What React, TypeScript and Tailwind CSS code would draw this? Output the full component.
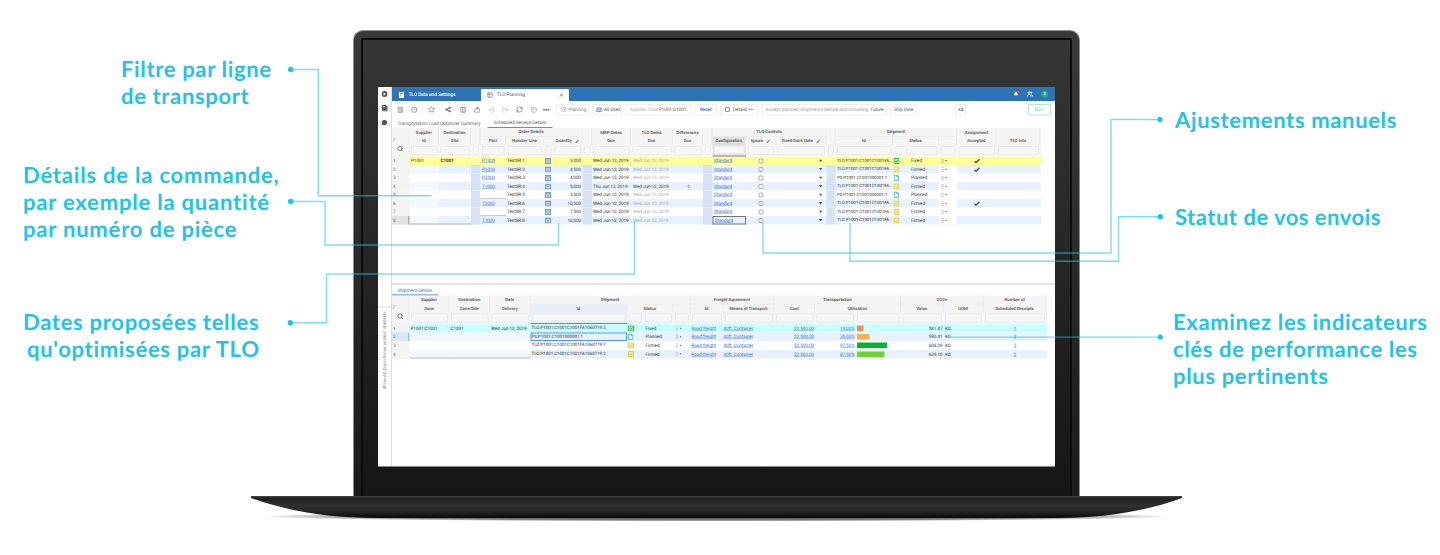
import type { ReactNode } from 'react'
import clsx from 'clsx'
import {
  Bell,
  Building2,
  Calculator,
  CircleHelp,
  Columns3,
  FileText,
  ListChecks,
  LogIn,
  LogOut,
  MessageCircle,
  MoreHorizontal,
  PanelsTopLeft,
  RefreshCw,
  Search,
  Share2,
  Star,
  Table2,
  Users,
  Weight,
  X,
} from 'lucide-react'

type Column = { label?: string; edit?: boolean; active?: boolean; span?: number; tint?: boolean }
type Group = { label?: string; span: number }

const PLAN_GRID =
  'grid grid-cols-[17.5px_29.5px_32px_9.5px_25.5px_38px_9px_29.5px_9.5px_39px_42px_30px_9.5px_33.5px_30px_50.5px_9px_57.5px_16px_30px_18px_39.5px_44px]'
const SHIP_GRID =
  'grid grid-cols-[17.5px_40px_40.5px_40.5px_96.5px_16.5px_30px_17px_33px_51px_40.5px_40.5px_45.5px_42.5px_40px_63px]'

const planGroups: Group[] = [
  { label: 'Supplier', span: 1 },
  { label: 'Destination', span: 1 },
  { span: 1 },
  { label: 'Order Details', span: 4 },
  { span: 1 },
  { label: 'MRP Dates', span: 1 },
  { label: 'TLO Dates', span: 1 },
  { label: 'Differences', span: 1 },
  { span: 1 },
  { label: 'TLO Controls', span: 3 },
  { span: 1 },
  { label: 'Shipment', span: 4 },
  { label: 'Assignment', span: 1 },
  { span: 1 },
]

const planColumns: Column[] = [
  { label: 'Id' },
  { label: 'Site' },
  {},
  { label: 'Part' },
  { label: 'Number Line' },
  {},
  { label: 'Quantity', edit: true },
  {},
  { label: 'Due' },
  { label: 'Due' },
  { label: 'Due' },
  {},
  { label: 'Configuration', active: true },
  { label: 'Ignore', edit: true },
  { label: 'Fixed Dock Date', edit: true },
  {},
  { label: 'Id' },
  { label: 'Status', span: 2 },
  {},
  { label: 'Accepted' },
  { label: 'TLO Info' },
]

const shipGroups: Group[] = [
  { label: 'Supplier', span: 1 },
  { label: 'Destination', span: 1 },
  { label: 'Date', span: 1 },
  { label: 'Shipment', span: 4 },
  { label: 'Freight Agreement', span: 2 },
  { label: 'Transportation', span: 3 },
  { label: 'CO2e', span: 2 },
  { label: 'Number of', span: 1 },
]

const shipColumns: Column[] = [
  { label: 'Zone' },
  { label: 'Zone/Site' },
  { label: 'Delivery' },
  { label: 'Id', tint: true },
  { label: 'Status', span: 2 },
  {},
  { label: 'Id' },
  { label: 'Means of Transport' },
  { label: 'Cost' },
  { label: 'Utilization', span: 2 },
  { label: 'Value' },
  { label: 'UOM' },
  { label: 'Scheduled Receipts' },
]

type Status = 'Fixed' | 'Firmed' | 'Planned'
type PlanRow = { part?: string; qty: string; mrp?: string; diff?: string; status: Status; accepted?: boolean }

const planRows: PlanRow[] = [
  { part: 'P1000', qty: '3,000', status: 'Fixed', accepted: true },
  { part: 'P2000', qty: '4,500', status: 'Firmed', accepted: true },
  { part: 'P3000', qty: '4,000', status: 'Planned' },
  { part: 'T1000', qty: '5,000', mrp: 'Thu Jun 13, 2019', diff: '-1', status: 'Firmed' },
  { qty: '3,000', status: 'Planned' },
  { part: 'T2000', qty: '10,000', status: 'Firmed', accepted: true },
  { qty: '7,500', status: 'Firmed' },
  { part: 'T3000', qty: '10,000', status: 'Firmed' },
]

const shipRows = [
  { id: 'TLO:P1001:C1001C1001FA1060719:3', status: 'Fixed', util: '15.00%', bar: 'w-[6.5px] bg-[#f58d4e]', co2: '581.47', n: '1' },
  { id: 'PS:P1001:C1001000001:1', status: 'Planned', util: '35.00%', bar: 'w-[12.5px] bg-[#f5b04e]', co2: '590.41', n: '2' },
  { id: 'TLO:P1001:C1001C1001FA1060719:1', status: 'Firmed', util: '97.50%', bar: 'w-[30px] bg-[#06b32e]', co2: '608.29', n: '3' },
  { id: 'TLO:P1001:C1001C1001FA1060719:2', status: 'Firmed', util: '87.50%', bar: 'w-[27.5px] bg-[#6fd136]', co2: '635.10', n: '2' },
] as const

export default function App() {
  return (
    <main className="relative flex h-[555px] w-[1440px] overflow-hidden bg-white font-['Roboto',sans-serif] [text-rendering:geometricPrecision]">
      <aside className="w-[353px] shrink-0 pt-[55px]">
        <Caption className="ml-[121px] h-[106px] tracking-[0.65px]">
          <span>Filtre par ligne</span>
          <span>de transport</span>
        </Caption>
        <Caption className="ml-[23px] h-[147px] tracking-[0.8px]">
          <span>Détails de la commande,</span>
          <span>par exemple la quantité</span>
          <span>par numéro de pièce</span>
        </Caption>
        <Caption className="ml-[23px] tracking-[0.7px]">
          <span>Dates proposées telles</span>
          <span className="ml-[4px]">qu'optimisées par TLO</span>
        </Caption>
      </aside>

      <Laptop />

      <aside className="pt-[106px] pl-[93px]">
        <Caption className="ml-[2px] h-[97px] tracking-[0.65px]">
          <span>Ajustements manuels</span>
        </Caption>
        <Caption className="ml-[2px] h-[105px] tracking-[0.5px]">
          <span>Statut de vos envois</span>
        </Caption>
        <Caption className="tracking-[0.65px]">
          <span>Examinez les indicateurs</span>
          <span>clés de performance les</span>
          <span>plus pertinents</span>
        </Caption>
      </aside>

      <Connectors />
    </main>
  )
}

function Caption({ className, children }: { className?: string; children: ReactNode }) {
  return (
    <p
      className={clsx(
        "flex flex-col font-['Lato',sans-serif] text-[22px] leading-[27px] font-bold whitespace-nowrap text-[#22c3e6]",
        className,
      )}
    >
      {children}
    </p>
  )
}

// Callout lines running from the captions onto the screen
function Connectors() {
  const lines = [
    'M291 69.5H318.3V195.8H431.5',
    'M291 201.5H325V245H558.5V223',
    'M291 322.7H326.5V274H634.5V222',
    'M1160 119.5H1111V253H763V223',
    'M1160 216.8H1118.5V261.2H850V223',
    'M1160 337.1H950',
  ]
  const dots = [
    [290.7, 69.5],
    [290.7, 201.5],
    [290.3, 322.7],
    [1160, 119.5],
    [1160.3, 216.8],
    [1160.3, 337.1],
  ]
  return (
    <svg className="absolute inset-0" width="1440" height="555" viewBox="0 0 1440 555" fill="none">
      {lines.map((d) => (
        <path key={d} d={d} stroke="#22c3e6" strokeWidth="1.4" strokeOpacity=".58" />
      ))}
      {dots.map(([x, y]) => (
        <circle key={`${x}-${y}`} cx={x} cy={y} r="2.7" fill="#22c3e6" />
      ))}
    </svg>
  )
}

function Laptop() {
  return (
    <div className="w-[727px] shrink-0 pt-[30px]">
      <div className="h-[466px] rounded-t-[10px] border-x border-t border-[#8d8d8d] bg-linear-to-b from-[#3a3a3a] to-[#1b1b1b] px-[7px] pt-[7px]">
        <div className="h-full rounded-t-[2px] border-x-2 border-t-2 border-[#0b0b0b] bg-linear-to-b from-[#353535] to-[#161616] px-[14.5px] pt-[47px]">
          <Screen />
        </div>
      </div>
      <svg className="-mx-[102px] block" width="931" height="30" viewBox="0 0 931 30">
        <defs>
          <linearGradient id="base" x1="0" y1="0" x2="0" y2="1">
            <stop offset="0" stopColor="#4a4a4a" />
            <stop offset=".1" stopColor="#202020" />
            <stop offset=".45" stopColor="#303030" />
            <stop offset=".75" stopColor="#222" />
            <stop offset="1" stopColor="#080808" />
          </linearGradient>
          <radialGradient id="shade">
            <stop offset="0" stopColor="#000" stopOpacity=".75" />
            <stop offset=".75" stopColor="#000" stopOpacity=".5" />
            <stop offset="1" stopColor="#000" stopOpacity="0" />
          </radialGradient>
        </defs>
        <ellipse cx="465" cy="20.5" rx="456" ry="5" fill="url(#shade)" />
        <path d="M0 0H931V2C895 15 855 22 805 22H126C76 22 36 15 0 2Z" fill="url(#base)" />
      </svg>
    </div>
  )
}

// Laid out at double size and scaled back so the tiny text and hairlines keep fractional positions
function Screen() {
  return (
    <div className="h-[380px] w-[677px] overflow-hidden">
      <div className="flex h-[380px] w-[677px] origin-top-left scale-50 border-b border-[#888] bg-white text-[4.6px] leading-none tracking-[-0.05px] whitespace-nowrap text-[#333] [zoom:2]">
        <nav className="flex w-[14px] shrink-0 flex-col items-center border-r border-[#ddd] pt-[4px] text-[#444]">
          <svg width="6" height="6" viewBox="0 0 12 12">
            <circle cx="6" cy="6" r="6" fill="#555" />
            <path d="M4 2.5L9 6L4 9.5Z" fill="#eee" />
          </svg>
          <FileText className="mt-[8px]" size={6.5} strokeWidth={4} />
          <MessageCircle className="mt-[8px]" size={6} fill="#555" />
          <div className="mt-[181px] flex w-full justify-center border-t border-[#ddd] pt-[4px]">
            <span className="rotate-180 text-[4.3px] text-[#888] [writing-mode:vertical-rl]">
              4Flow AG Demo Server am06s1:db606Mv
            </span>
          </div>
        </nav>
        <div className="flex min-w-0 flex-1 flex-col">
          <TitleBar />
          <Toolbar />
          <div className="flex h-[10px] shrink-0 items-stretch pl-[5.5px] text-[4.7px] text-[#666]">
            <span className="flex w-[90px] items-center pt-[1px]">Transportation Load Optimizer Summary</span>
            <span className="flex w-[65px] items-center border-b border-[#888] pt-[1px] pl-[6px]">
              Scheduled Receipt Details
            </span>
          </div>
          <PlanTable />
          <div className="mt-[58.5px] h-[2px] shrink-0 bg-[#e4e4e4]" />
          <div className="flex h-[10.5px] w-[46.5px] shrink-0 items-center border-b border-[#2878d8] pt-[1px] pl-[5.5px] text-[4.7px] text-[#2878d8]">
            Shipment Details
          </div>
          <ShipTable />
        </div>
      </div>
    </div>
  )
}

function TitleBar() {
  return (
    <header className="flex h-[14px] shrink-0 items-stretch bg-[#2e74b2] text-[4.8px] text-white">
      <div className="flex w-[89px] items-center gap-[4px] pt-[2px] pl-[6.5px] font-medium">
        <svg width="6" height="7" viewBox="0 0 12 14">
          <path d="M1 1H11V13H1Z" fill="#fff" />
          <path d="M3 4H9M3 7H6" stroke="#2e74b2" strokeWidth="1.5" />
        </svg>
        TLO Data and Settings
      </div>
      <div className="mt-[2px] flex w-[88px] items-center rounded-t-[1px] bg-white pl-[6px] text-[#555]">
        <PanelsTopLeft size={6} />
        <span className="ml-[4px] flex-1">TLO Planning</span>
        <X className="mr-[5px]" size={5} strokeWidth={3} />
      </div>
      <div className="ml-auto flex items-center gap-[8.5px] pr-[7px]">
        <span className="relative">
          <Bell size={5} fill="#fff" />
          <i className="absolute -top-px -right-px size-[2.5px] rounded-full bg-[#f04438]" />
        </span>
        <Users size={6} strokeWidth={3} />
        <span className="flex size-[6.5px] items-center justify-center rounded-full bg-[#20b28c] text-[4px]">S</span>
      </div>
    </header>
  )
}

function Toolbar() {
  const box = 'flex h-[11.5px] shrink-0 items-center rounded-[1px] border border-[#eee] text-[#555]'
  return (
    <div className="flex h-[17px] shrink-0 items-center pl-[5px] text-[4.7px] text-[#666]">
      <Calculator size={6.5} />
      <CircleHelp className="ml-[7.5px]" size={6.5} />
      <i className="ml-[4.5px] h-[9px] border-l border-[#eee]" />
      <Star className="ml-[5px]" size={7} />
      <Share2 className="ml-[10px]" size={6} strokeWidth={3.5} />
      <span className="ml-[5.5px] flex h-[11px] w-[13px] items-center justify-center border border-[#f0f0f0]">
        <Columns3 className="shrink-0" size={6.5} />
      </span>
      <Weight className="ml-[4.5px]" size={6.5} />
      <LogIn className="ml-[7.5px] text-[#aaa]" size={6.5} />
      <LogOut className="ml-[7.5px] text-[#aaa]" size={6.5} />
      <RefreshCw className="ml-[7.5px]" size={7} />
      <Table2 className="ml-[7.5px] text-[#aaa]" size={6.5} />
      <MoreHorizontal className="ml-[5.5px]" size={7.5} strokeWidth={4} />
      <span className={clsx(box, 'ml-[6px] w-[33px] gap-[2px] pl-[3.5px] text-[#777]')}>
        <ListChecks size={6} />
        Planning
      </span>
      <span className={clsx(box, 'ml-[3px] w-[30px] gap-[2px] pl-[3px]')}>
        <Building2 className="text-[#2878d8]" size={6} />
        All Sites
      </span>
      <span className={clsx(box, 'ml-[3px] w-[66px] justify-center gap-[1px]')}>
        <span className="text-[#aaa]">Supplier Zone</span>P1001:C1001
      </span>
      <span className={clsx(box, 'ml-[3.5px] w-[22.5px] justify-center font-medium !text-[#2f6bd8]')}>Reset</span>
      <span className={clsx(box, 'ml-[3px] w-[38px] gap-[3px] pl-[4px]')}>
        <i className="size-[5px] rounded-[1px] border border-[#999]" />
        Details &gt;&gt;
      </span>
      <span className={clsx(box, 'ml-[4px] w-[125px] justify-center gap-[1px]')}>
        <span className="tracking-[0.08px] text-[#999]">Accept planned shipments before and including:</span>Future
      </span>
      <span className={clsx(box, 'ml-[3px] w-[27px] justify-center')}>Ship Date</span>
      <span className={clsx(box, 'ml-[38px] w-[11px] justify-center font-bold')}>+3</span>
      <span className="mr-[4px] ml-auto flex h-[11.5px] w-[23px] items-center justify-center rounded-[1px] border border-[#b5e3df] text-[#6bc4bd]">
        EDIT
      </span>
    </div>
  )
}

function TableHeader({ grid, groups, columns }: { grid: string; groups: Group[]; columns: Column[] }) {
  return (
    <div className={clsx(grid, 'grid-rows-[9px_8.5px_11px] bg-[#f5f5f5] text-center text-[4.4px] font-bold text-[#666]')}>
      <div className="row-span-3 flex flex-col border-r border-[#eee] pt-[9.5px]">
        <svg className="ml-[0.5px]" width="5" height="5" viewBox="0 0 5 5">
          <path d="M0 0H5L0 5Z" fill="#dcdcdc" />
        </svg>
        <Search className="mt-[3px] ml-[5px]" size={6.5} strokeWidth={3} />
      </div>
      {groups.map((g, i) => (
        <div
          key={i}
          className={clsx(
            'flex items-center justify-center border-r border-[#ececec]',
            g.span === 1 && 'col-span-1',
            g.span === 2 && 'col-span-2 border-b',
            g.span === 3 && 'col-span-3 border-b',
            g.span === 4 && 'col-span-4 border-b',
          )}
        >
          {g.label}
        </div>
      ))}
      {columns.map((c, i) => (
        <div
          key={i}
          className={clsx(
            'flex items-center justify-center border-r border-[#ececec]',
            c.span === 2 && 'col-span-2',
            c.active && 'bg-[#dedede]',
            c.tint && 'bg-[#e9eff8]',
          )}
        >
          {c.label}
          {c.edit && <EditMark />}
        </div>
      ))}
      {columns
        .flatMap((c) => (c.span === 2 ? [c, c] : [c]))
        .map((c, i) => (
          <div
            key={i}
            className={clsx(
              'px-[1.5px] pt-[0.5px] pb-[1.5px]',
              c.active && 'border-b border-b-[#888] bg-[#e6e6e6]',
              c.tint && 'border-b border-b-[#4a90e2] bg-[#e9eff8]',
            )}
          >
            <div className="h-full rounded-[1px] border border-[#ebebeb] bg-[#f7f7f7]" />
          </div>
        ))}
    </div>
  )
}

function PlanTable() {
  return (
    <div className="w-[649px] shrink-0">
      <TableHeader grid={PLAN_GRID} groups={planGroups} columns={planColumns} />
      {planRows.map((r, i) => {
        const first = i === 0
        const last = i === planRows.length - 1
        const even = i % 2 === 1
        const gap = first ? '' : 'bg-[#d7e3f5]'
        return (
          <div
            key={i}
            className={clsx(
              PLAN_GRID,
              'h-[8.5px] items-stretch [&>*]:flex [&>*]:items-center',
              first ? 'bg-[#ffff99]' : even ? 'bg-[#e7f2fe]' : 'bg-white',
            )}
          >
            <div className={clsx('pl-[1px] text-[#666]', last ? 'border-r border-[#777] bg-[#e2e2e2]' : 'bg-[#f4f4f4]')}>
              {i + 1}
            </div>
            <div className={clsx('pl-[1.5px]', even && 'bg-[#f2f8ff]', last && 'border-b border-[#b5b5b5]')}>
              {first && 'P1001'}
            </div>
            <div className={clsx('pl-[1.5px] font-bold', last && 'border-b border-[#b5b5b5]')}>{first && 'C1001'}</div>
            <div className={gap} />
            <div className={clsx('pl-[1.5px]', !r.part && 'border-b border-[#ccc] bg-white')}>
              <Link>{r.part}</Link>
            </div>
            <div className="pl-[1px]">TestSR:{i + 1}</div>
            <div>
              <SourceIcon />
            </div>
            <div className="justify-end pr-[1.5px]">{r.qty}</div>
            <div className={gap} />
            <div className="pl-[1px]">{r.mrp ?? 'Wed Jun 12, 2019'}</div>
            <div className={clsx('pl-[2px]', !r.diff && 'text-[#a9a9a9]')}>Wed Jun 12, 2019</div>
            <div className="justify-center">{r.diff}</div>
            <div className={gap} />
            <div className={clsx('pl-[1.5px]', last && 'border border-[#777] pl-[0.5px]')}>
              <Link>Standard</Link>
            </div>
            <div className="justify-center">
              <i className="size-[5px] rounded-[1.5px] border border-[#aaa] bg-white" />
            </div>
            <div className="justify-end pr-[4px]">
              <Caret />
            </div>
            <div className={gap} />
            <div className="pl-[1.5px] text-[4.4px]">
              {r.status === 'Planned' ? 'PS:P1001:C1001000001:1' : 'TLO:P1001:C1001C1001FA...'}
            </div>
            <div className="pl-[0.5px]">
              <StatusIcon status={r.status} />
            </div>
            <div className="pl-[2px]">{r.status}</div>
            <div className={clsx('gap-[1px] pl-[2px]', !first && 'bg-white')}>
              <MenuMark />
            </div>
            <div className="justify-center">
              {r.accepted && (
                <svg width="6" height="5" viewBox="0 0 12 10" fill="none" stroke="#444" strokeWidth="2.4">
                  <path d="M1 5.5L4 8.5L11 1.5" />
                </svg>
              )}
            </div>
            <div />
          </div>
        )
      })}
    </div>
  )
}

function ShipTable() {
  return (
    <div className="w-[655px] shrink-0">
      <TableHeader grid={SHIP_GRID} groups={shipGroups} columns={shipColumns} />
      {shipRows.map((r, i) => {
        const first = i === 0
        const selected = i === 1
        const even = i % 2 === 1
        const last = i === shipRows.length - 1
        const side = clsx('pl-[1px]', even && 'bg-[#f2f8ff]', last && 'border-b border-[#bbb]')
        return (
          <div
            key={i}
            className={clsx(
              SHIP_GRID,
              'h-[8.6px] [&>*]:flex [&>*]:items-center',
              first ? 'bg-[#c8ffff]' : even ? 'bg-[#e7f2fe]' : 'bg-white',
            )}
          >
            <div className={clsx('pl-[1px] text-[#666]', selected ? 'border-r border-[#4a9cf0] bg-[#d8e8f8]' : 'bg-[#f4f4f4]')}>
              {i + 1}
            </div>
            <div className={side}>{first && 'P1001:C1001'}</div>
            <div className={side}>{first && 'C1001'}</div>
            <div className={side}>{first && 'Wed Jun 12, 2019'}</div>
            <div className={clsx('text-[4.5px]', selected ? 'border border-[#4a9cf0]' : 'pl-[1px]')}>{r.id}</div>
            <div className="pl-[1px]">
              <StatusIcon status={r.status} />
            </div>
            <div className="pl-[2px]">{r.status}</div>
            <div className="gap-[1px] pl-[2px]">
              <MenuMark />
            </div>
            <div className="pl-[1px]">
              <Link>Road freight</Link>
            </div>
            <div>
              <Link>40ft. Container</Link>
            </div>
            <div className="justify-end pr-[1px]">
              <Link>$2 500.00</Link>
            </div>
            <div className="justify-end pr-[1px]">
              <Link>{r.util}</Link>
            </div>
            <div className="pl-[1.5px]">
              <i className={clsx('h-[5.5px]', r.bar)} />
            </div>
            <div className="justify-end pr-[1px]">{r.co2}</div>
            <div className="pl-[1.5px]">KG</div>
            <div className="justify-center">
              <Link>{r.n}</Link>
            </div>
          </div>
        )
      })}
    </div>
  )
}

function Link({ children }: { children: ReactNode }) {
  return (
    <span className="text-[#3a6fd0] underline decoration-[#6a94dd] decoration-[0.5px] underline-offset-[0.5px]">
      {children}
    </span>
  )
}

function Caret() {
  return (
    <svg width="3.4" height="2.4" viewBox="0 0 10 7">
      <path d="M0 0H10L5 7Z" fill="#555" />
    </svg>
  )
}

function EditMark() {
  return (
    <svg className="ml-[3px]" width="4" height="4" viewBox="0 0 8 8" fill="none" stroke="#444">
      <path d="M2 6L7.4 0.8" strokeWidth="2" />
      <path d="M0.6 7.4L2.5 5.4" strokeWidth="1.2" />
    </svg>
  )
}

function MenuMark() {
  return (
    <>
      <svg width="3" height="5" viewBox="0 0 6 10" fill="none" stroke="#999">
        <path d="M0 1.5H6M0 5H6M0 8.5H6" />
      </svg>
      <svg width="2.2" height="1.8" viewBox="0 0 10 7">
        <path d="M0 0H10L5 7Z" fill="#555" />
      </svg>
    </>
  )
}

function SourceIcon() {
  return (
    <svg className="ml-[1px]" width="6" height="6" viewBox="0 0 12 12">
      <path d="M0 0H12V12H0Z" fill="#6d9fe0" />
      <path d="M2 3H10V10H2Z" fill="#c9d8f0" />
      <path d="M3 4L6 7L9 4M6 7V10" stroke="#c4706c" strokeWidth="1.3" fill="none" />
    </svg>
  )
}

function StatusIcon({ status }: { status: Status }) {
  if (status === 'Planned') {
    return (
      <svg width="5.6" height="6.4" viewBox="0 0 10 12" fill="#fff" stroke="#35a9ee" strokeWidth="1.6">
        <path d="M1 1H6L9 4V11H1ZM6 1V4H9" />
      </svg>
    )
  }
  return (
    <svg
      width="6"
      height="6"
      viewBox="0 0 12 12"
      strokeWidth="1.8"
      className={status === 'Fixed' ? 'fill-[#a5e8a8] stroke-[#2fb55e]' : 'fill-[#f7ee9c] stroke-[#e0c843]'}
    >
      <path d="M1 1H11V11H1Z" />
      <path d="M3.2 6L5.2 8L9 4" fill="none" />
    </svg>
  )
}
